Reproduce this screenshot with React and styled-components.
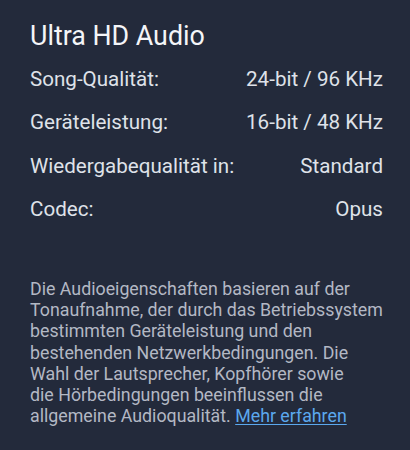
import styled, { createGlobalStyle } from 'styled-components';

const GlobalStyle = createGlobalStyle`
  html, body {
    margin: 0;
    padding: 0;
    background: #232a3b;
  }
  body {
    font-family: Roboto, "Noto Sans", sans-serif;
  }
`;

const Panel = styled.section`
  width: 410px;
  height: 450px;
  box-sizing: border-box;
  padding: 18px 27px 0 30px;
  background: #232a3b;
  color: #e6e8ee;
`;

const Title = styled.h1`
  margin: 0 0 3px;
  font-size: 26.8px;
  font-weight: 400;
  line-height: 36px;
  color: #f4f5f8;
`;

const InfoList = styled.dl`
  margin: 0;
  display: flex;
  flex-direction: column;
`;

const InfoRow = styled.div`
  display: flex;
  justify-content: space-between;
  align-items: center;
  height: 43.5px;
  font-size: 20.6px;
  color: #dfe2e9;
`;

const Label = styled.dt`
  margin: 0;
`;

const Value = styled.dd`
  margin: 0;
`;

const Note = styled.p`
  margin: 47px 0 0;
  font-size: 17.8px;
  line-height: 21.2px;
  color: #b3b8c4;
`;

const MoreLink = styled.a`
  color: #5ba8ee;
  text-decoration: underline;
  text-underline-offset: 2px;
`;

const rows = [
  ['Song-Qualität:', '24-bit / 96 KHz'],
  ['Geräteleistung:', '16-bit / 48 KHz'],
  ['Wiedergabequalität in:', 'Standard'],
  ['Codec:', 'Opus'],
];

const App = () => (
  <>
    <GlobalStyle />
    <Panel>
      <Title>Ultra HD Audio</Title>
      <InfoList>
        {rows.map(([label, value]) => (
          <InfoRow key={label}>
            <Label>{label}</Label>
            <Value>{value}</Value>
          </InfoRow>
        ))}
      </InfoList>
      <Note>
        Die Audioeigenschaften basieren auf der Tonaufnahme, der durch das
        Betriebssystem bestimmten Geräteleistung und den
        <br />
        bestehenden Netzwerkbedingungen. Die Wahl der Lautsprecher, Kopfhörer
        sowie
        <br />
        die Hörbedingungen beeinflussen die allgemeine Audioqualität.{' '}
        <MoreLink href="#">Mehr erfahren</MoreLink>
      </Note>
    </Panel>
  </>
);

export default App;
